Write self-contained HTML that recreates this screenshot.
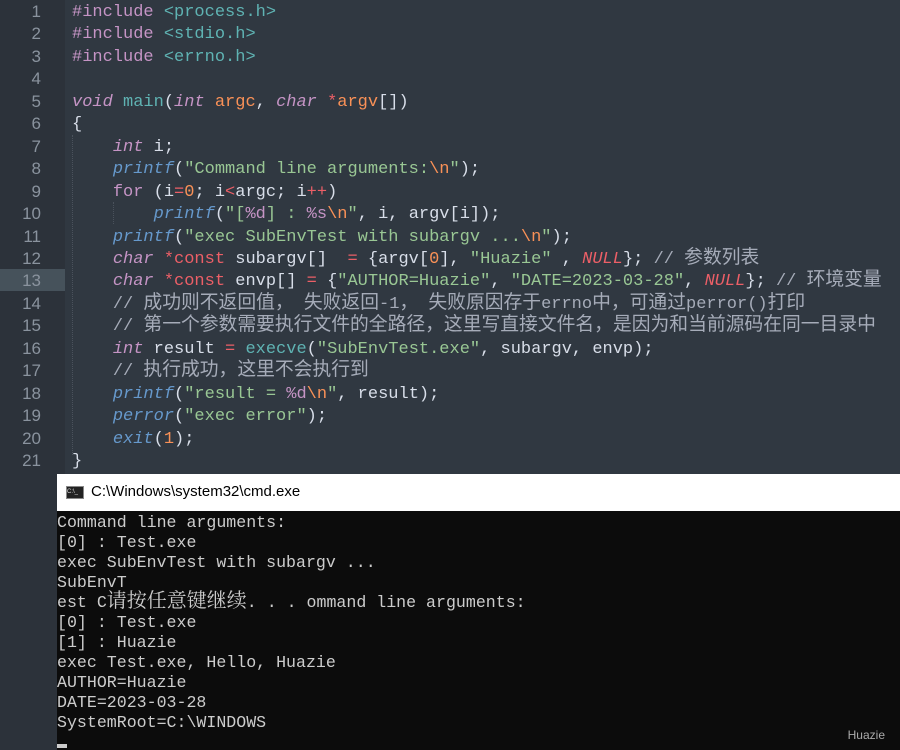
<!DOCTYPE html>
<html><head><meta charset="utf-8"><style>
body{margin:0;width:900px;height:750px;background:#303841;overflow:hidden;position:relative;font-family:"Liberation Mono","Noto Sans CJK SC",monospace;}
.g{position:absolute;left:0;top:0;width:65px;height:750px;background:#2c323a}
.hl{position:absolute;left:0;top:269px;width:65px;height:22px;background:#46525b}
.ln{position:absolute;left:0;width:41px;text-align:right;color:#8a939e;font-size:17px;font-family:"Liberation Sans",sans-serif}
.code{position:absolute;left:72px;top:2px;font-size:17px;line-height:22.45px;color:#d8dee9;white-space:pre}
.k{color:#c594c5;font-style:italic}.kf{color:#c594c5}.f{color:#6699cc;font-style:italic}.fn{color:#5fb3b3}
.s{color:#99c794}.n{color:#f99157}.r{color:#ec5f67}.ri{color:#ec5f67;font-style:italic}.c{color:#a6acb9}.p{color:#f99157}.e{color:#5fb3b3}
.z{font-size:18.8px;line-height:10px}
.guide{position:absolute;left:72px;top:135px;width:0;height:320px;border-left:1px dotted #4a525c}
.guide2{position:absolute;left:113px;top:202px;width:0;height:22px;border-left:1px dotted #4a525c}
.win{position:absolute;left:57px;top:474px;width:843px;height:276px;background:#0c0c0c}
.tb{height:37px;background:#fff;position:relative}
.tb span{position:absolute;left:34px;top:9px;font:15px "Liberation Sans",sans-serif;color:#000}
.ic{position:absolute;left:9px;top:12px;width:18px;height:13px;background:#222;border:1px solid #888;box-sizing:border-box;color:#ddd;font-size:6px;line-height:11px;font-family:"Liberation Sans";}
.con{position:absolute;left:0;top:39px;font-family:"Liberation Mono","Noto Serif CJK SC",monospace;font-size:16.6px;line-height:20px;color:#cccccc;white-space:pre}
.cz{font-size:20px;line-height:10px}
.cur{position:absolute;left:0;top:270px;width:10px;height:4px;background:#ccc}
.wm{position:absolute;right:15px;bottom:8px;font:12px "Liberation Sans",sans-serif;color:#aaa}
</style></head><body>
<div class="g"></div><div class="hl"></div>
<div class="ln" style="top:1px;line-height:22.45px">1<br>2<br>3<br>4<br>5<br>6<br>7<br>8<br>9<br>10<br>11<br>12<br>13<br>14<br>15<br>16<br>17<br>18<br>19<br>20<br>21</div>
<div class="guide"></div><div class="guide2"></div>
<div class="code"><span class="kf">#include</span> <span class="e">&lt;process.h&gt;</span>
<span class="kf">#include</span> <span class="e">&lt;stdio.h&gt;</span>
<span class="kf">#include</span> <span class="e">&lt;errno.h&gt;</span>

<span class="k">void</span> <span class="fn">main</span>(<span class="k">int</span> <span class="p">argc</span>, <span class="k">char</span> <span class="r">*</span><span class="p">argv</span>[])
{
    <span class="k">int</span> i;
    <span class="f">printf</span>(<span class="s">"Command line arguments:</span><span class="n">\n</span><span class="s">"</span>);
    <span class="kf">for</span> (i<span class="r">=</span><span class="n">0</span>; i<span class="r">&lt;</span>argc; i<span class="r">++</span>)
        <span class="f">printf</span>(<span class="s">"[</span><span class="k" style="font-style:normal">%d</span><span class="s">] : </span><span class="k" style="font-style:normal">%s</span><span class="n">\n</span><span class="s">"</span>, i, argv[i]);
    <span class="f">printf</span>(<span class="s">"exec SubEnvTest with subargv ...</span><span class="n">\n</span><span class="s">"</span>);
    <span class="k">char</span> <span class="r">*const</span> subargv[]  <span class="r">=</span> {argv[<span class="n">0</span>], <span class="s">"Huazie"</span> , <span class="ri">NULL</span>}; <span class="c">// <span class="z">参数列表</span></span>
    <span class="k">char</span> <span class="r">*const</span> envp[] <span class="r">=</span> {<span class="s">"AUTHOR=Huazie"</span>, <span class="s">"DATE=2023-03-28"</span>, <span class="ri">NULL</span>}; <span class="c">// <span class="z">环境变量</span></span>
    <span class="c">// <span class="z">成功则不返回值，</span> <span class="z">失败返回</span>-1<span class="z">，</span> <span class="z">失败原因存于</span>errno<span class="z">中，可通过</span>perror()<span class="z">打印</span></span>
    <span class="c">// <span class="z">第一个参数需要执行文件的全路径，这里写直接文件名，是因为和当前源码在同一目录中</span></span>
    <span class="k">int</span> result <span class="r">=</span> <span class="e">execve</span>(<span class="s">"SubEnvTest.exe"</span>, subargv, envp);
    <span class="c">// <span class="z">执行成功，这里不会执行到</span></span>
    <span class="f">printf</span>(<span class="s">"result = </span><span class="k" style="font-style:normal">%d</span><span class="n">\n</span><span class="s">"</span>, result);
    <span class="f">perror</span>(<span class="s">"exec error"</span>);
    <span class="f">exit</span>(<span class="n">1</span>);
}</div>
<div class="win"><div class="tb"><div class="ic">C:\_</div><span>C:\Windows\system32\cmd.exe</span></div>
<div class="con">Command line arguments:
[0] : Test.exe
exec SubEnvTest with subargv ...
SubEnvT
est C<span class="cz">请按任意键继续</span>. . . ommand line arguments:
[0] : Test.exe
[1] : Huazie
exec Test.exe, Hello, Huazie
AUTHOR=Huazie
DATE=2023-03-28
SystemRoot=C:\WINDOWS</div>
<div class="cur"></div>
<div class="wm">Huazie</div>
</div>
</body></html>
